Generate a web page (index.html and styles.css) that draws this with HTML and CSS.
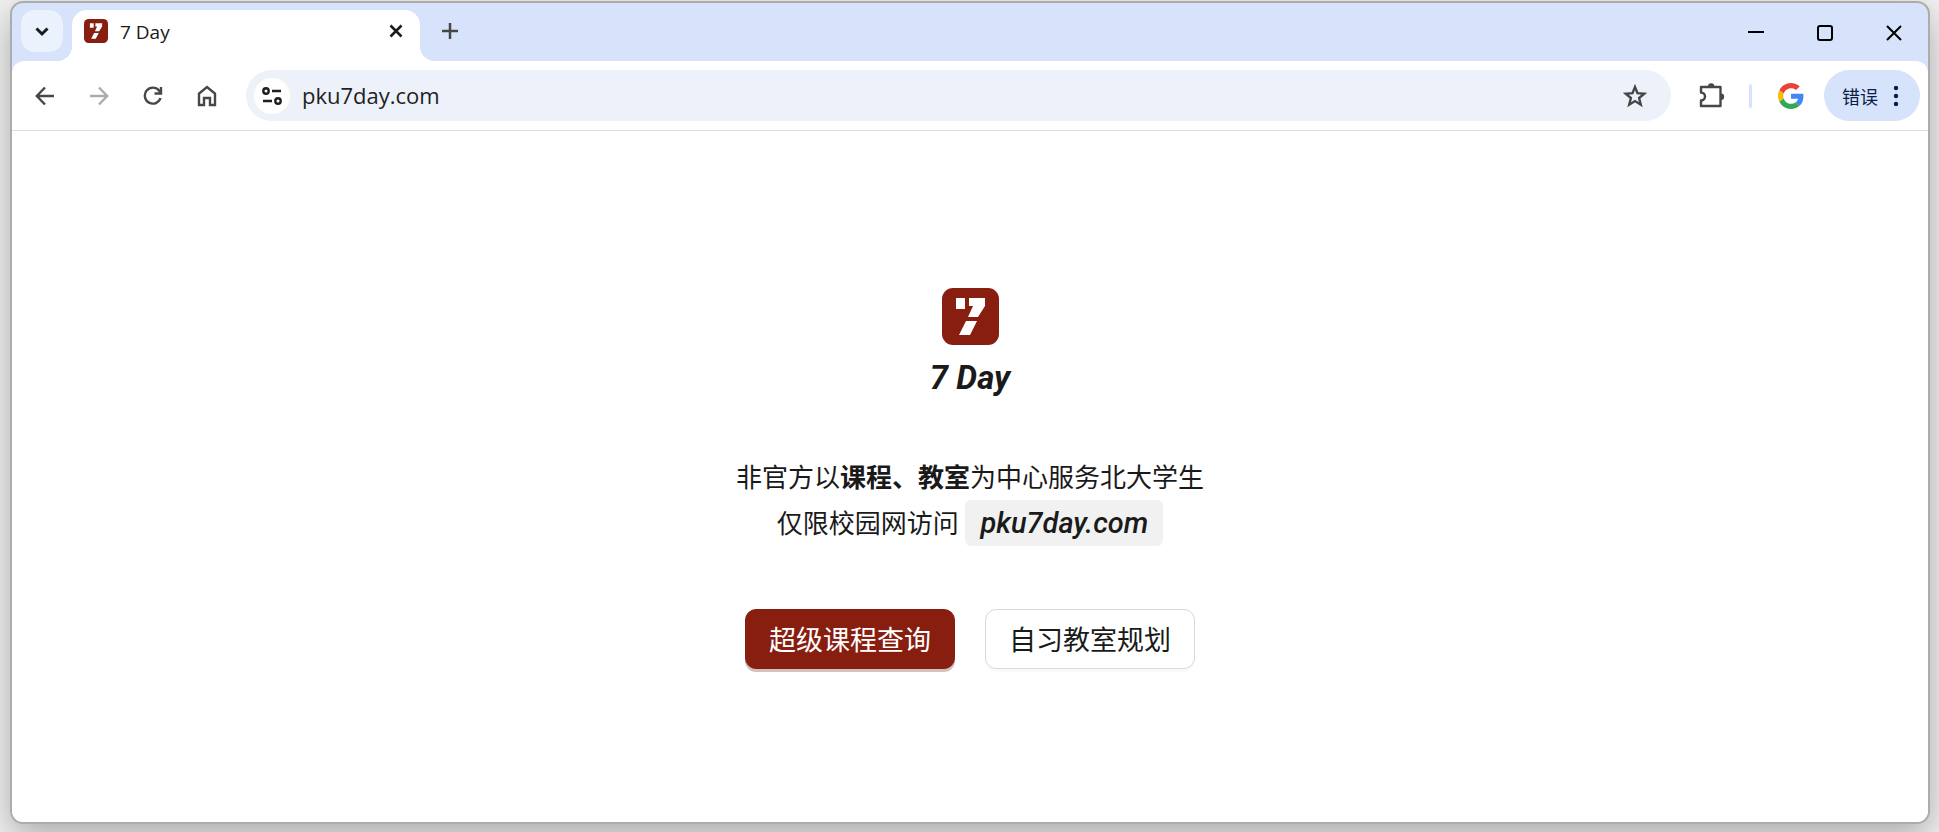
FILE: index.html
```html
<!DOCTYPE html>
<html lang="zh-CN">
<head>
  <meta charset="UTF-8" />
  <meta name="viewport" content="width=device-width, initial-scale=1" />
  <title>7 Day</title>
  <link rel="stylesheet" href="styles.css">
</head>
<body>

<svg class="sprite" aria-hidden="true">
  <symbol id="logo" viewBox="0 0 57 57">
    <rect width="57" height="57" rx="11" fill="#871e10" />
    <path d="M14 10h9v11h-9zM27 10h16v8l-7 11H26l5-11h-4zM24 33h11l-7 14H17z" fill="#fff" />
  </symbol>
</svg>

<div class="window">
  <header class="tab-strip">
    <button class="tab-search" aria-label="Search tabs">
      <svg width="14" height="14" viewBox="0 0 14 14"><path d="M1.500 4.500L7 10l5.500-5.500" /></svg>
    </button>
    <div class="tab">
      <svg class="favicon"><use href="#logo" /></svg>
      <span class="tab-title">7 Day</span>
      <button class="icon-btn tab-close" aria-label="Close tab">
        <svg width="14" height="14" viewBox="0 0 14 14"><path d="M1.500 1.500l11 11M12.500 1.500l-11 11" /></svg>
      </button>
    </div>
    <button class="icon-btn new-tab" aria-label="New tab">
      <svg width="16" height="16" viewBox="0 0 16 16"><path d="M8 0v16M0 8h16" /></svg>
    </button>
    <div class="window-controls">
      <button class="icon-btn" aria-label="Minimize">
        <svg width="16" height="16" viewBox="0 0 16 16"><path d="M0 7h16" /></svg>
      </button>
      <button class="icon-btn" aria-label="Maximize">
        <svg width="16" height="16" viewBox="0 0 16 16"><rect x="1" y="1" width="14" height="14" rx="2" /></svg>
      </button>
      <button class="icon-btn" aria-label="Close">
        <svg width="16" height="16" viewBox="0 0 16 16"><path d="M1 1l14 14M15 1L1 15" /></svg>
      </button>
    </div>
  </header>

  <nav class="toolbar">
    <div class="nav-buttons">
      <button class="icon-btn" aria-label="Back">
        <svg width="20" height="20" viewBox="0 0 20 20"><path d="M19 10H2M10 1.500L1.800 10l8.200 8.500" /></svg>
      </button>
      <button class="icon-btn" aria-label="Forward" disabled>
        <svg width="20" height="20" viewBox="0 0 20 20"><path d="M1 10h17M10 1.500l8.200 8.500L10 18.500" /></svg>
      </button>
      <button class="icon-btn" aria-label="Reload">
        <svg width="20" height="20" viewBox="0 0 20 20"><path d="M17.500 12a8 8 0 1 1-1.500-7.500L18 7M18 1v6.500h-6.500" /></svg>
      </button>
      <button class="icon-btn" aria-label="Home">
        <svg width="20" height="22" viewBox="0 0 20 22"><path d="M2 20V8.500L10 2l8 6.500V20h-5v-7H7v7z" /></svg>
      </button>
    </div>

    <div class="address-bar">
      <button class="icon-btn site-info" aria-label="View site information">
        <svg width="20" height="18" viewBox="0 0 20 18"><circle cx="4" cy="4" r="2.700" /><path d="M10 4h9M1 14h9" /><circle cx="16" cy="14" r="2.700" /></svg>
      </button>
      <input class="address" type="text" value="pku7day.com" aria-label="Address" />
      <button class="icon-btn" aria-label="Bookmark this page">
        <svg width="24" height="24" viewBox="0 0 24 24"><path d="M12 3l2.500 6.200 6.800.5-5.200 4.300 1.700 6.700L12 17.100l-5.800 3.600L7.900 14 2.700 9.700l6.800-.5z" /></svg>
      </button>
    </div>

    <button class="icon-btn extensions" aria-label="Extensions">
      <svg width="26" height="26" viewBox="0 0 26 26">
        <path d="M2 4h19.500v19H2v-5.500a4 4 0 0 0 0-8z" stroke-linejoin="round" />
        <path class="solid" d="M9 3.500a3.200 3.200 0 0 1 6.400 0zM22 10.500a3.200 3.200 0 0 1 0 6.400z" />
      </svg>
    </button>
    <span class="divider"></span>
    <button class="icon-btn google" aria-label="Google">
      <svg width="26" height="26" viewBox="0 0 48 48">
        <path fill="#ea4335" d="M24 9.500c3.540 0 6.710 1.220 9.210 3.600l6.850-6.850C35.900 2.380 30.470 0 24 0 14.620 0 6.510 5.380 2.560 13.220l7.980 6.190C12.430 13.720 17.740 9.500 24 9.500z" />
        <path fill="#4285f4" d="M46.980 24.550c0-1.570-.15-3.090-.38-4.550H24v9.020h12.940c-.58 2.960-2.260 5.480-4.780 7.180l7.730 6c4.510-4.180 7.090-10.360 7.090-17.650z" />
        <path fill="#fbbc05" d="M10.530 28.590c-.48-1.450-.76-2.990-.76-4.590s.27-3.140.76-4.590l-7.980-6.190C.92 16.460 0 20.120 0 24c0 3.880.92 7.540 2.560 10.780z" />
        <path fill="#34a853" d="M24 48c6.480 0 11.930-2.130 15.890-5.810l-7.730-6c-2.150 1.450-4.920 2.300-8.160 2.300-6.260 0-11.570-4.220-13.470-9.910l-7.980 6.190C6.510 42.620 14.620 48 24 48z" />
      </svg>
    </button>
    <button class="menu-btn">
      错误
      <svg width="6" height="22" viewBox="0 0 6 22"><circle cx="3" cy="3" r="2.200" /><circle cx="3" cy="11" r="2.200" /><circle cx="3" cy="19" r="2.200" /></svg>
    </button>
  </nav>

  <main class="page">
    <svg class="logo" role="img" aria-label="7 Day"><use href="#logo" /></svg>
    <h1>7 Day</h1>
    <p class="intro">
      非官方以<strong>课程、教室</strong>为中心服务北大学生<br />
      仅限校园网访问 <span class="domain">pku7day.com</span>
    </p>
    <div class="actions">
      <button class="btn primary">超级课程查询</button>
      <button class="btn">自习教室规划</button>
    </div>
  </main>
</div>

</body>
</html>
```

FILE: styles.css
```css
* { box-sizing: border-box; }
body { margin: 0; height: 100vh; padding: 1px 9px 8px 10px; display: flex; overflow: hidden;
       background: #f2f2f2;
       font-family: "Open Sans", "Noto Sans CJK SC", sans-serif; color: #1a1a1a; }
button { border: none; padding: 0; background: none; font: inherit; color: inherit; cursor: pointer; }
svg { display: block; fill: none; stroke: currentColor; stroke-width: 2; }
.sprite { position: absolute; width: 0; height: 0; }
symbol { stroke: none; }

.window { flex: 1; display: flex; flex-direction: column; border: 2px solid #acacac; border-radius: 13px;
          overflow: hidden; background: #d7e2fb; box-shadow: 0 12px 36px rgba(0,0,0,0.3); }

/* tab strip */
.tab-strip { display: flex; align-items: flex-start; height: 58px; padding: 7px 0 0 9px; }
.tab-search { width: 42px; height: 42px; border-radius: 14px; background: #ebf2fd; display: flex;
              align-items: center; justify-content: center; }
.tab-search svg { stroke-width: 3; }
.tab { position: relative; display: flex; align-items: center; width: 348px; height: 51px; margin-left: 9px;
       padding: 0 17px 9px 12px; border-radius: 15px 15px 0 0; background: #fff; }
.tab::before, .tab::after { content: ""; position: absolute; bottom: 0; width: 15px; height: 15px; }
.tab::before { right: 100%; background: radial-gradient(circle at 0 0, transparent 15px, #fff 15px); }
.tab::after { left: 100%; background: radial-gradient(circle at 100% 0, transparent 15px, #fff 15px); }
.favicon { width: 24px; height: 24px; stroke: none; }
.tab-title { flex: 1; margin-left: 12px; padding-top: 1px; font-size: 19px; line-height: 24px; }
.icon-btn { display: flex; align-items: center; justify-content: center; }
.tab-close svg { stroke-width: 2.5; }
.new-tab { height: 42px; margin-left: 22px; color: #474747; }
.new-tab svg { stroke-width: 2.5; }
.window-controls { display: flex; gap: 53px; height: 45px; margin-left: auto; padding-right: 26px; color: #000; }

/* toolbar */
.toolbar { display: flex; align-items: center; height: 70px; padding: 0 8px 0 23px; border-radius: 12px 12px 0 0;
           border-bottom: 1px solid #dedede; background: #fff; color: #474747; }
.toolbar svg { stroke-width: 2.4; }
.nav-buttons { display: flex; gap: 34px; }
.icon-btn:disabled { color: #ababab; }
.address-bar { flex: 1; display: flex; align-items: center; height: 51px; margin-left: 29px; padding: 0 24px 0 8px;
               border-radius: 26px; background: #edf2fa; }
.site-info { width: 36px; height: 36px; border-radius: 50%; background: #fff; color: #1f1f1f; }
.address { flex: 1; min-width: 0; height: 40px; margin-left: 12px; padding: 0 0 2px; border: none; outline: none;
           background: none; font: 22px "Open Sans", sans-serif; color: #1f1f1f; }
.extensions { margin-left: 28px; }
.extensions .solid { fill: currentColor; stroke: none; }
.divider { width: 3px; height: 24px; margin: 0 26px 0 24px; border-radius: 2px; background: #d7e2fb; }
.google svg { stroke: none; }
.menu-btn { display: flex; align-items: center; gap: 15px; height: 51px; margin-left: 20px; padding: 0 21px 0 18px;
            border-radius: 26px; background: #d7e2fb; color: #0b1c47; font-size: 18px; }
.menu-btn svg { fill: currentColor; stroke: none; }

/* page */
.page { flex: 1; display: flex; flex-direction: column; align-items: center; justify-content: center;
        padding-top: 3px; background: #fff; }
.logo { width: 57px; height: 57px; stroke: none; }
h1 { margin: 12px 0 0; font: italic 700 33px/42px Roboto, sans-serif; }
.intro { margin: 55px 0 0; font-size: 26px; line-height: 46px; text-align: center; }
.domain { display: inline-block; vertical-align: top; padding: 0 15px; border-radius: 6px; background: #f1f1f1;
          font: italic 500 29px/46px Roboto, sans-serif; }
.actions { display: flex; gap: 30px; margin-top: 63px; }
.btn { height: 60px; padding: 0 23px; border: 1px solid #d9d9d9; border-radius: 11px; background: #fff;
       box-shadow: 0 3px 0 #fafafa; font-size: 27px; }
.btn.primary { border-color: #871e10; background: #871e10; box-shadow: 0 3px 0 #d3c1be; color: #fff; }
```
